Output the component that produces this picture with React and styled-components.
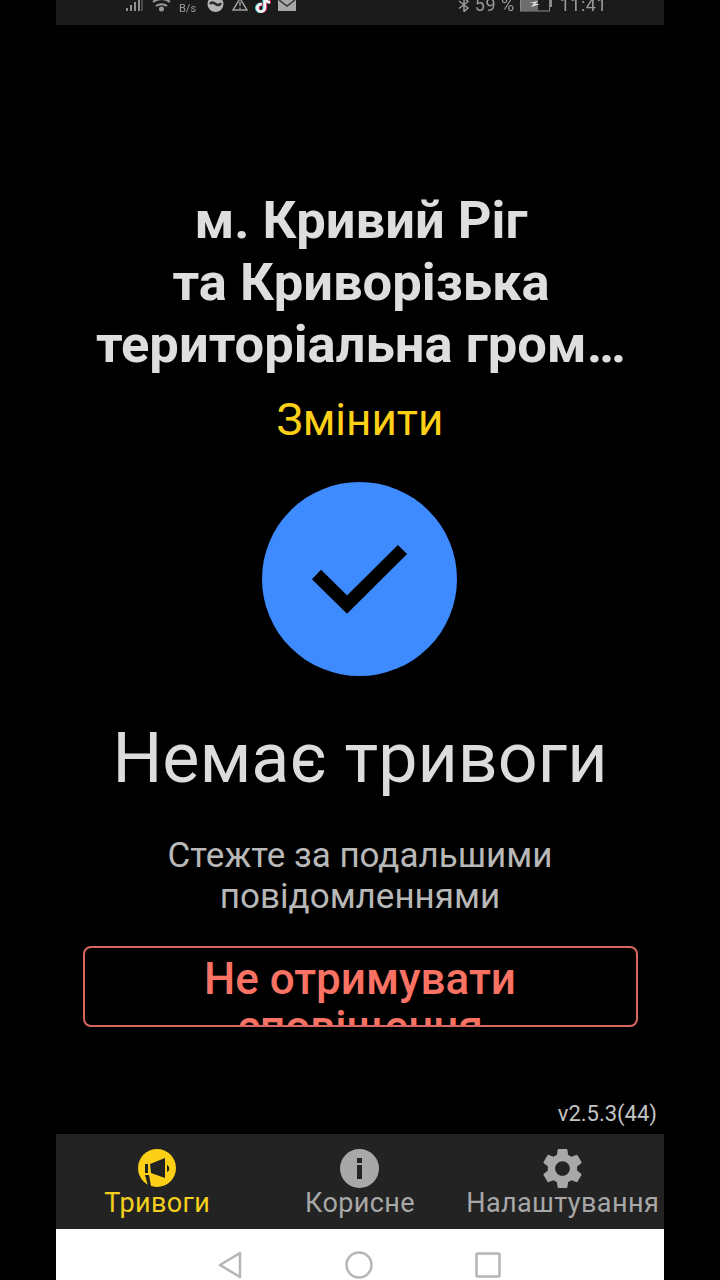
import React from "react";
import styled, { createGlobalStyle } from "styled-components";
import { FaTiktok } from "react-icons/fa";
import { MdSettings } from "react-icons/md";

const Global = createGlobalStyle`
  html, body {
    margin: 0;
    padding: 0;
    background: #000;
  }
  * {
    box-sizing: border-box;
  }
`;

const Screen = styled.div`
  width: 608px;
  height: 1280px;
  margin: 0 auto;
  display: flex;
  flex-direction: column;
  background: #000;
  font-family: Roboto, "Noto Sans", sans-serif;
  overflow: hidden;
`;

const StatusBar = styled.div`
  height: 25px;
  flex: none;
  background: #1b1b1b;
  padding: 0 57px 0 69px;
  display: flex;
  justify-content: space-between;
  align-items: flex-start;
  overflow: hidden;
  color: #9a9a9a;
  filter: blur(0.5px);
`;

const StatusGroup = styled.div`
  display: flex;
  align-items: center;
  height: 14px;
  margin-top: -2px;
  gap: ${(p) => p.$gap || 7}px;
`;

const Speed = styled.span`
  font-size: 11px;
  margin-top: 7px;
`;

const StatusText = styled.span`
  font-size: 18px;
  line-height: 14px;
  letter-spacing: 0.5px;
`;

const Main = styled.main`
  flex: 1;
  display: flex;
  flex-direction: column;
  align-items: center;
  padding-top: 164px;
  min-height: 0;
`;

const Title = styled.h1`
  margin: 0 0 0 2px;
  width: 530px;
  font-size: 52.5px;
  line-height: 62px;
  font-weight: 700;
  color: #dedede;
  text-align: center;
`;

const TitleLine = styled.div`
  white-space: nowrap;
  overflow: hidden;
  text-overflow: ellipsis;
`;

const ChangeLink = styled.div`
  margin-top: 20px;
  font-size: 44px;
  line-height: 50px;
  color: #fdd017;
`;

const StatusCircle = styled.div`
  margin: 37px 1px 0 0;
  width: 195px;
  height: 194px;
  border-radius: 50%;
  background: #3e8aff;
  display: flex;
  align-items: center;
  justify-content: center;
`;

const Headline = styled.div`
  margin-top: 39px;
  font-size: 70px;
  line-height: 86px;
  color: #dcdcdc;
`;

const Hint = styled.div`
  margin-top: 34px;
  font-size: 35px;
  line-height: 41px;
  color: #b8b8b8;
  text-align: center;
`;

const MuteButton = styled.div`
  margin-top: 29px;
  width: 555px;
  height: 81px;
  flex: none;
  border: 2px solid #d9675e;
  border-radius: 8px;
  padding: 7px 20px 0;
  font-size: 44px;
  line-height: 48px;
  font-weight: 500;
  color: #fa7263;
  text-align: center;
  overflow: hidden;
`;

const Version = styled.div`
  margin-top: auto;
  align-self: flex-end;
  padding: 0 7px 7px 0;
  font-size: 22px;
  line-height: 26px;
  color: #c4c4c4;
`;

const TabBar = styled.nav`
  height: 95px;
  flex: none;
  background: #232323;
  display: grid;
  grid-template-columns: repeat(3, 1fr);
`;

const Tab = styled.div`
  display: flex;
  flex-direction: column;
  align-items: center;
  padding-top: 14px;
  color: ${(p) => (p.$active ? "#f4cf1c" : "#a8a8a8")};
  font-size: 27px;
  line-height: 32px;
  white-space: nowrap;
  letter-spacing: 0.4px;
`;

const TabIcon = styled.div`
  width: 40px;
  height: 40px;
  margin-bottom: -1px;
  display: flex;
  align-items: center;
  justify-content: center;
  svg {
    flex: none;
  }
`;

const NavBar = styled.div`
  height: 51px;
  flex: none;
  background: #fff;
  padding: 20px 163px 0 161px;
  display: flex;
  align-items: center;
  justify-content: space-between;
`;

const App = () => (
  <Screen>
    <Global />
    <StatusBar>
      <StatusGroup>
        <svg width="19" height="14" viewBox="0 0 19 14" fill="#8f8f8f">
          <rect x="1" y="10" width="2" height="3" />
          <rect x="5" y="7" width="2" height="6" />
          <rect x="9" y="4" width="2" height="9" />
          <rect x="13" y="1" width="2" height="12" />
          <rect x="16" y="1" width="2" height="12" opacity="0.4" />
        </svg>
        <svg width="21" height="14" viewBox="0 0 21 14" fill="none" stroke="#9a9a9a" strokeWidth="2">
          <path d="M2 4c5-4 12-4 17 0M5 8c3-2.500 8-2.500 11 0" />
          <circle cx="10.500" cy="11" r="1.500" fill="#9a9a9a" />
        </svg>
        <Speed>B/s</Speed>
        <svg width="19" height="14" viewBox="0 0 19 14" style={{ marginLeft: 3 }}>
          <circle cx="9.500" cy="6" r="8" fill="#b4b4b4" />
          <path d="M4 6c2-3 4-1 5.500 0s4 2 5.500-1" stroke="#2a2a2a" strokeWidth="2.500" fill="none" />
        </svg>
        <svg width="16" height="14" viewBox="0 0 16 14" fill="none" stroke="#a0a0a0" strokeWidth="1.500">
          <path d="M8 0.500 15 12H1Z" />
          <path d="M8 4v4M8 9.500v1.500" />
        </svg>
        <FaTiktok size={16} color="#f2f2f2" style={{ filter: "drop-shadow(1px 0 0 #e8285a) drop-shadow(-1px 0 0 #3fd6d8)" }} />
        <svg width="18" height="14" viewBox="0 0 18 14">
          <rect y="-2" width="18" height="15" fill="#a8a8a8" />
          <path d="M1 2l8 6 8-6" stroke="#333" strokeWidth="1.500" fill="none" />
        </svg>
      </StatusGroup>
      <StatusGroup $gap={5}>
        <svg width="12" height="14" viewBox="0 0 12 14" fill="none" stroke="#9a9a9a" strokeWidth="1.500">
          <path d="M1 3l9 7-4 3.500V0l4 3.500-9 7" />
        </svg>
        <StatusText>59 %</StatusText>
        <svg width="33" height="14" viewBox="0 0 33 14">
          <rect x="0.500" y="-3" width="29" height="16" fill="none" stroke="#8a8a8a" />
          <rect x="1" y="-3" width="17" height="16" fill="#6e6e6e" />
          <path d="M9 5l9-2-3 3h5l-9 3 3-4z" fill="#e0e0e0" />
          <rect x="30" y="2" width="2" height="7" fill="#8a8a8a" />
        </svg>
        <StatusText style={{ marginLeft: 2 }}>11:41</StatusText>
      </StatusGroup>
    </StatusBar>

    <Main>
      <Title>
        <TitleLine>м. Кривий Ріг</TitleLine>
        <TitleLine>та Криворізька</TitleLine>
        <TitleLine>територіальна громада</TitleLine>
      </Title>
      <ChangeLink>Змінити</ChangeLink>
      <StatusCircle>
        <svg width="110" height="80" viewBox="0 0 110 80" fill="none" stroke="#000" strokeWidth="13">
          <path d="M11.500 35.500 42 65.500 97.500 10.500" />
        </svg>
      </StatusCircle>
      <Headline>Немає тривоги</Headline>
      <Hint>
        Стежте за подальшими
        <br />
        повідомленнями
      </Hint>
      <MuteButton>Не отримувати сповіщення</MuteButton>
      <Version>v2.5.3(44)</Version>
    </Main>

    <TabBar>
      <Tab $active>
        <TabIcon>
          <svg width="38" height="38" viewBox="0 0 38 38">
            <circle cx="19" cy="19" r="19" fill="#fdd017" />
            <path d="M12 15 27 9v20L13 24z" fill="#222" />
            <path d="M7 15h3v9H7z" fill="#222" />
            <path d="M7 26h4l2 11h-3z" fill="#222" />
            <path d="M29 16c3 1 3 6 0 7z" fill="#222" />
          </svg>
        </TabIcon>
        Тривоги
      </Tab>
      <Tab>
        <TabIcon>
          <svg width="39" height="39" viewBox="0 0 39 39">
            <circle cx="19.500" cy="19.500" r="19.500" fill="#a8a8a8" />
            <rect x="17" y="16" width="5" height="14" fill="#232323" />
            <rect x="17" y="9" width="5" height="5" fill="#232323" />
          </svg>
        </TabIcon>
        Корисне
      </Tab>
      <Tab>
        <TabIcon>
          <MdSettings size={49} color="#a8a8a8" />
        </TabIcon>
        Налаштування
      </Tab>
    </TabBar>

    <NavBar>
      <svg width="26" height="30" viewBox="0 0 26 30" fill="none" stroke="#b5b5b5" strokeWidth="2.500">
        <path d="M23 3v24L3 15z" strokeLinejoin="round" />
      </svg>
      <svg width="28" height="28" viewBox="0 0 28 28" fill="none" stroke="#b5b5b5" strokeWidth="2.500">
        <circle cx="14" cy="14" r="12.500" />
      </svg>
      <svg width="26" height="26" viewBox="0 0 26 26" fill="none" stroke="#b5b5b5" strokeWidth="2.500">
        <rect x="1.500" y="1.500" width="23" height="23" rx="1" />
      </svg>
    </NavBar>
  </Screen>
);

export default App;
